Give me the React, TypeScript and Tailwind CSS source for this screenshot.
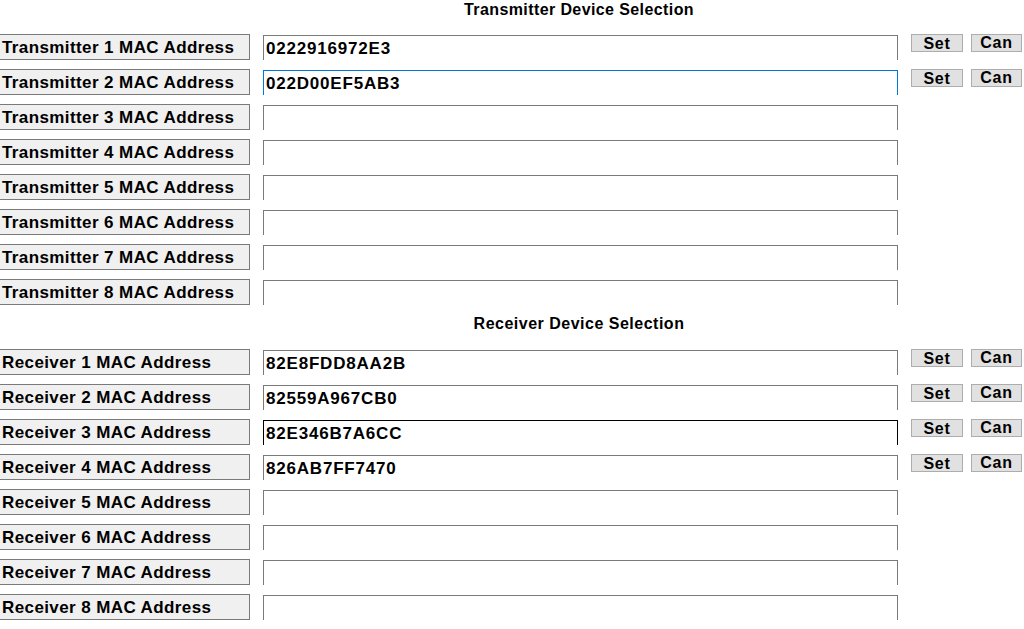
import React from "react";

type Row = { label: string; value: string; buttons: boolean; border?: string };

const font = { fontFamily: '"Liberation Sans", Arial, sans-serif' };

const tx: Row[] = [
  { label: "Transmitter 1 MAC Address", value: "0222916972E3", buttons: true },
  { label: "Transmitter 2 MAC Address", value: "022D00EF5AB3", buttons: true, border: "focus" },
  { label: "Transmitter 3 MAC Address", value: "", buttons: false },
  { label: "Transmitter 4 MAC Address", value: "", buttons: false },
  { label: "Transmitter 5 MAC Address", value: "", buttons: false },
  { label: "Transmitter 6 MAC Address", value: "", buttons: false },
  { label: "Transmitter 7 MAC Address", value: "", buttons: false },
  { label: "Transmitter 8 MAC Address", value: "", buttons: false },
];

const rx: Row[] = [
  { label: "Receiver 1 MAC Address", value: "82E8FDD8AA2B", buttons: true },
  { label: "Receiver 2 MAC Address", value: "82559A967CB0", buttons: true },
  { label: "Receiver 3 MAC Address", value: "82E346B7A6CC", buttons: true, border: "hover" },
  { label: "Receiver 4 MAC Address", value: "826AB7FF7470", buttons: true },
  { label: "Receiver 5 MAC Address", value: "", buttons: false },
  { label: "Receiver 6 MAC Address", value: "", buttons: false },
  { label: "Receiver 7 MAC Address", value: "", buttons: false },
  { label: "Receiver 8 MAC Address", value: "", buttons: false },
];

function FieldRow({ r }: { r: Row }) {
  const borderCls =
    r.border === "focus"
      ? "border-[#0078d7]"
      : r.border === "hover"
      ? "border-[#000000]"
      : "border-[#7a7a7a]";
  return (
    <div className="flex items-start h-[35px] shrink-0">
      <div className="-ml-px w-[251px] h-[26px] border border-[#7a7a7a] bg-[#f0f0f0] flex items-center pl-[2px] text-[17px] tracking-[0.4px] font-bold text-black leading-none whitespace-nowrap">
        {r.label}
      </div>
      <div
        className={`ml-[13px] mt-px w-[635px] h-[25px] border-t border-l border-r ${borderCls} bg-white flex items-center pl-[2px] pt-[1px] text-[17px] tracking-[0.8px] font-bold text-black leading-none`}
      >
        {r.value}
      </div>
      {r.buttons && (
        <>
          <div className="ml-[13px] w-[52px] h-[18px] border border-[#adadad] bg-[#e1e1e1] flex items-center justify-center pt-[1px] text-[16px] tracking-[0.7px] font-bold leading-none text-black">
            Set
          </div>
          <div className="ml-[8px] w-[51px] h-[18px] border border-[#adadad] bg-[#e1e1e1] flex items-center justify-center text-[16px] tracking-[0.7px] font-bold leading-none text-black pb-[1px]">
            Can
          </div>
        </>
      )}
    </div>
  );
}

export default function App() {
  return (
    <div className="w-[1024px] h-[629px] bg-white overflow-hidden flex flex-col" style={font}>
      <div className="h-[34px] shrink-0 flex justify-center">
        <div className="ml-[134px] pt-[1px] text-[16px] tracking-[0.4px] font-bold leading-[17px] text-black">
          Transmitter Device Selection
        </div>
      </div>
      {tx.map((r) => (
        <FieldRow key={r.label} r={r} />
      ))}
      <div className="h-[35px] shrink-0 flex justify-center">
        <div className="ml-[134px] pt-[1px] text-[16px] tracking-[0.5px] font-bold leading-[17px] text-black">
          Receiver Device Selection
        </div>
      </div>
      {rx.map((r) => (
        <FieldRow key={r.label} r={r} />
      ))}
    </div>
  );
}
